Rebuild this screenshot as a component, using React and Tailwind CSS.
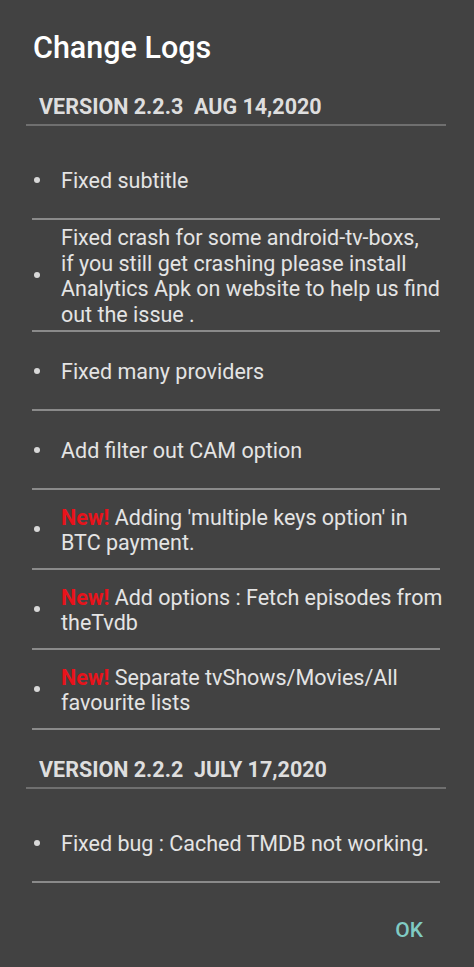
import React from 'react';

const NewTag = () => <span className="text-[#e8131b] font-bold">New!</span>;

const versions = [
  {
    title: 'VERSION 2.2.3\u00a0\u00a0AUG 14,2020',
    items: [
      { lines: 1, text: <>Fixed subtitle</> },
      {
        lines: 4,
        text: (
          <>
            Fixed crash for some android-tv-boxs,<br />
            if you still get crashing please install<br />
            Analytics Apk on website to help us find<br />
            out the issue .
          </>
        ),
      },
      { lines: 1, text: <>Fixed many providers</> },
      { lines: 1, text: <>Add filter out CAM option</> },
      { lines: 2, text: <><NewTag /> Adding 'multiple keys option' in<br />BTC payment.</> },
      { lines: 2, text: <><NewTag /> Add options : Fetch episodes from<br />theTvdb</> },
      { lines: 2, text: <><NewTag /> Separate tvShows/Movies/All<br />favourite lists</> },
    ],
  },
  {
    title: 'VERSION 2.2.2\u00a0\u00a0JULY 17,2020',
    items: [{ lines: 1, text: <>Fixed bug : Cached TMDB not working.</> }],
  },
];

const App = () => {
  return (
    <div className="min-h-screen bg-[#424242] pl-[26px] pr-[28px] font-['Roboto',sans-serif] text-[#e4e4e4]">
      {/* Title */}
      <div className="h-[67px] pt-[30px] pl-[7px]">
        <h1 className="text-[30.5px] leading-[36px] font-medium text-white">Change Logs</h1>
      </div>

      {versions.map((v, i) => (
        <div key={i}>
          {/* Version header */}
          <div className="h-[59px] border-b-2 border-[#6f6f6f] pl-[13px] pt-[26px]">
            <h2 className="text-[21.5px] leading-[28px] font-bold whitespace-nowrap text-[#dedede]">{v.title}</h2>
          </div>

          {/* Items */}
          <ul className="pt-[15px]">
            {v.items.map((item, j) => (
              <li
                key={j}
                className={`mx-[6px] flex items-center border-b-2 border-[#8a8a8a] py-[3px] ${
                  item.lines === 2 ? 'min-h-[80px]' : 'min-h-[79px]'
                }`}
              >
                <span className="ml-[2px] h-[6px] w-[6px] shrink-0 rounded-full bg-[#d8d8d8]" />
                <p className="ml-[21px] -mr-[10px] whitespace-nowrap pt-[2px] text-[21.5px] leading-[25.5px]">
                  {item.text}
                </p>
              </li>
            ))}
          </ul>
        </div>
      ))}

      {/* Footer */}
      <div className="flex justify-end pt-[33px] pr-[23px]">
        <button className="text-[21px] leading-[28px] font-medium text-[#80cbc4]">OK</button>
      </div>
    </div>
  );
};

export default App;
